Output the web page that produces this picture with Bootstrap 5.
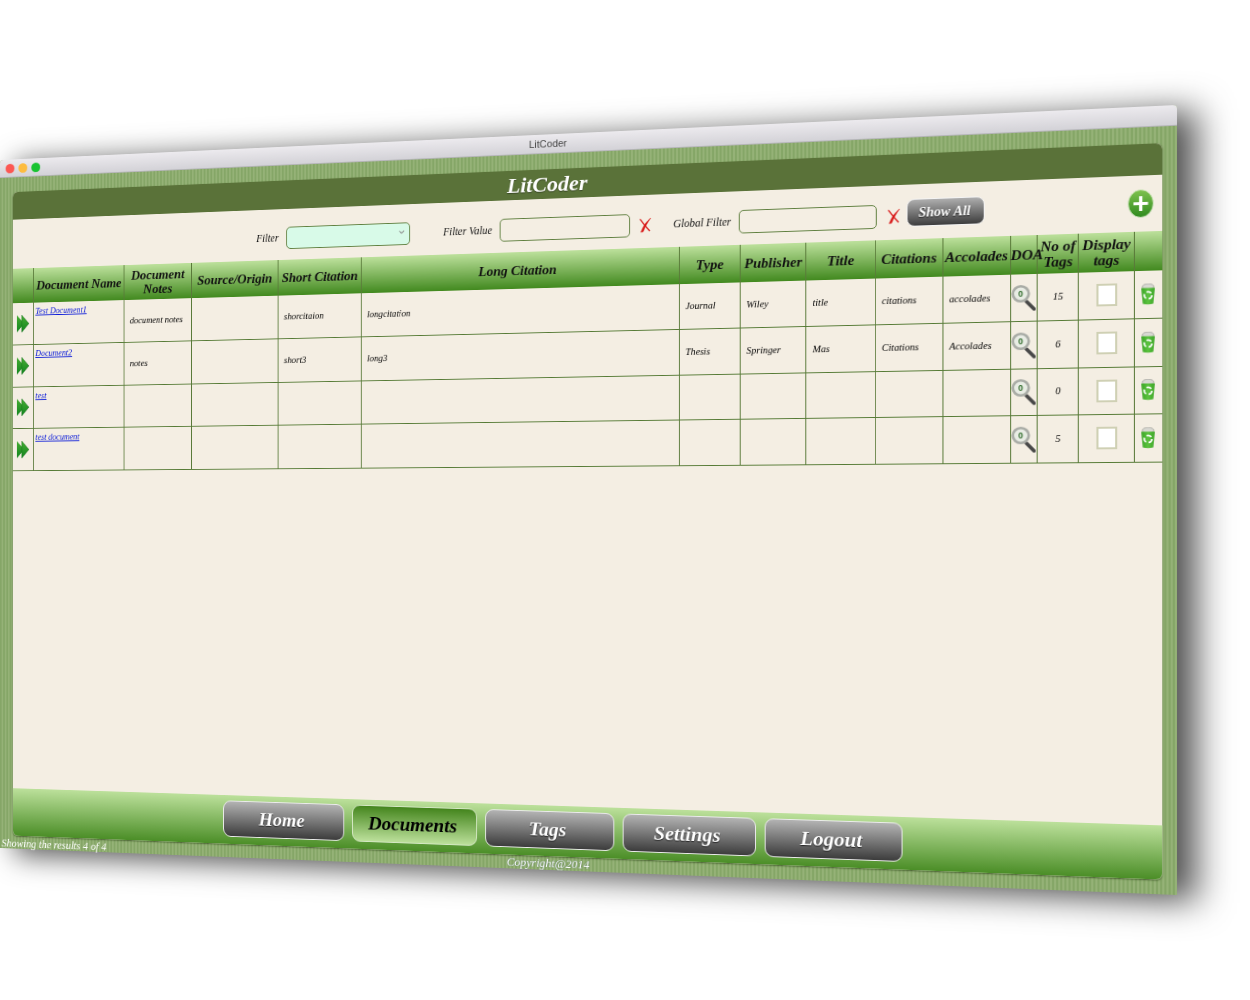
<!DOCTYPE html>
<html>
<head>
    <meta charset="UTF-8">
    <title>LitCoder</title>
    <link href="https://cdn.jsdelivr.net/npm/bootstrap@5.3.3/dist/css/bootstrap.min.css" rel="stylesheet">
    <style>
        html, body { height: 100%; overflow: hidden; background: #fff; }
        body { font-family: "Liberation Serif", serif; }

        /* the whole window is tilted, like the screenshot */
        #litWindow {
            position: absolute; left: 0; top: 0; width: 1280px; height: 800px;
            transform-origin: 0 0;
            transform: matrix3d(0.800805,-0.05356,0,-0.00010087, 0,0.86,0,0, 0,0,1,0, 0,160,0,1);
            box-shadow: 18px 6px 34px rgba(0,0,0,.7);
            background: repeating-linear-gradient(90deg, #85a667 0 2px, #95b277 2px 4px);
            border-radius: 4px 4px 0 0;
        }
        #titleBar {
            height: 21px; font: 11px "Liberation Sans", sans-serif; color: #444;
            background: linear-gradient(#eceaee, #d3d2d7); border-bottom: 1px solid #b5b5b8;
            border-radius: 4px 4px 0 0;
        }
        .light { width: 11px; height: 11px; border-radius: 50%; }
        .light-red { background: #fc5753; }
        .light-amber { background: #fdbc40; }
        .light-green { background: #19c332; }
        #lightsBox { left: 7px; top: 5px; gap: 5px; }
        #panel {
            margin: 17px 14px 0 16px; height: 747px; border-radius: 6px; overflow: hidden;
            background: #f4eee3; box-shadow: 0 1px 2px rgba(40,60,20,.7);
        }
        #panelHead {
            height: 32px; padding-right: 4px; background: #5a7239; color: #fff;
            font-size: 24px; font-weight: bold; font-style: italic; line-height: 32px;
            text-shadow: 0 1px 1px rgba(0,0,0,.4);
        }
        #filterRow { height: 57px; padding: 20px 8px 0 294px; font-style: italic; font-size: 11.5px; color: #111; }
        #filterRow label { height: 25px; line-height: 25px; white-space: nowrap; }
        .filter-field {
            width: 142px; height: 25px; padding: 0 4px; border: 1px solid #5f7f3f; border-radius: 5px;
            background-color: transparent; box-shadow: none;
        }
        select.filter-field {
            background-color: #d8fae8; background-size: 7px; background-position: right 5px top 6px;
            background-image: url("data:image/svg+xml,%3csvg xmlns='http://www.w3.org/2000/svg' viewBox='0 0 16 16'%3e%3cpath fill='none' stroke='%23888' stroke-width='2.5' d='M2 5l6 6 6-6'/%3e%3c/svg%3e");
        }
        .clear-mark { width: 14px; height: 17px; margin: 4px 0 0 9px; }
        .clear-far { margin-left: 10px; }
        .lab-a { width: 26px; margin-right: 9px; }
        .lab-b { width: 54px; margin: 0 9px 0 37px; }
        .lab-c { width: 60px; margin: 0 9px 0 23px; }
        #showAll {
            width: 78px; height: 29px; padding: 0 2px 0 0; margin: -5px 0 0 6px; border: 1px solid #f4f4f4; border-radius: 8px;
            background: linear-gradient(#aeaeae, #3d3d3d); color: #fff;
            font: italic bold 14px "Liberation Serif", serif; text-shadow: 0 1px 1px #222;
        }
        #addBtn { width: 25px; height: 29px; margin: -6px 0 0 auto; }

        #docTable { table-layout: fixed; width: 1250px; --bs-table-bg: transparent; border-collapse: collapse; }
        #docTable th {
            height: 40px; padding: 0; text-align: center; vertical-align: middle; white-space: nowrap;
            background: linear-gradient(#bce09b, #42891f); color: #111; border: 0; border-right: 1px solid #5a7a3a;
            font-size: 15px; font-weight: bold; font-style: italic; line-height: 16px;
        }
        #docTable td {
            height: 48px; padding: 0 6px; vertical-align: middle; font-size: 10.2px; font-style: italic; color: #000;
            border: 0; border-right: 1px solid #5a7a3a; border-bottom: 1px solid #557a35; background: transparent;
            box-shadow: none; white-space: nowrap;
        }
        #docTable tr:nth-child(even) td { height: 49px; }
        #docTable th:last-child, #docTable td:last-child { border-right: 0; }
        #docTable td.name-cell { vertical-align: top; padding: 2px 2px 0; }
        #docTable td.icon-cell { padding: 0; text-align: center; }
        #docTable a { color: #0a1ad8; font-size: 9.8px; }
        #docTable svg { display: inline-block; vertical-align: middle; }
        #docTable svg text { font-style: normal; }
        .tag-box { display: inline-block; width: 20px; height: 23px; background: #fff; border: 2px solid #cfd0b4; vertical-align: middle; }

        #panelFoot {
            height: 55px; margin-top: 0; padding-top: 6px; gap: 9px;
            background: linear-gradient(#bce09b, #4b8e27);
        }
        .foot-btn {
            width: 141px; height: 41px; padding: 0 3px 0 0; border: 1px solid #ececec; border-radius: 9px;
            background: linear-gradient(#b3b3b3, #3c3c3c); color: #fff;
            font: italic bold 21.5px/38px "Liberation Serif", serif; text-shadow: 0 1px 1px #222;
        }
        .foot-btn:hover { background: linear-gradient(#b3b3b3, #3c3c3c); color: #fff; }
        .foot-btn.current { background: linear-gradient(#44851d, #bce09b); color: #000; text-shadow: none; border-color: #d5e8c5; }
        #statusLine {
            left: 2px; top: 785px; color: #fff; font-size: 12.5px; font-style: italic; white-space: nowrap;
        }
        #copyLine { left: 0; right: 0; top: 783px; color: #fff; font-size: 13px; font-style: italic; text-align: center; text-shadow: 0 0 1px #355; }
    </style>
</head>
<body>
<svg width="0" height="0" class="position-absolute">
    <defs>
        <linearGradient id="arrowFill" x1="0" y1="0" x2="0" y2="1">
            <stop offset="0" stop-color="#46ad32"/><stop offset="1" stop-color="#12841f"/>
        </linearGradient>
        <linearGradient id="plusFill" x1="0" y1="0" x2="0" y2="1">
            <stop offset="0" stop-color="#7fc24f"/><stop offset="1" stop-color="#2f8a1e"/>
        </linearGradient>
        <linearGradient id="binFill" x1="0" y1="0" x2="1" y2="0">
            <stop offset="0" stop-color="#3aa526"/><stop offset=".5" stop-color="#5cc23f"/><stop offset="1" stop-color="#3aa526"/>
        </linearGradient>
        <symbol id="icoArrow" viewBox="0 0 17 22">
            <path d="M1 1 L10 11 L1 21Z" fill="url(#arrowFill)"/>
            <path d="M7 1 L16 11 L7 21Z" fill="url(#arrowFill)" stroke="#0c6a17" stroke-width=".5"/>
        </symbol>
        <symbol id="icoClear" viewBox="0 0 14 17">
            <path d="M1.500 2 C3 3 5 7 12 15" stroke="#d81818" stroke-width="1.300" fill="none"/>
            <path d="M13 1 C9 4 5 9 2.500 16 L5 15.500 C7 10 10 5 13 1Z" fill="#d81818" stroke="#d81818" stroke-width=".5"/>
        </symbol>
        <symbol id="icoBin" viewBox="0 0 15 22">
            <ellipse cx="7.500" cy="3.200" rx="5.500" ry="3" fill="#d8d8d2" stroke="#9c9c96" stroke-width=".7"/>
            <path d="M1 4.500 H14 L12.500 20.500 Q7.500 22 2.500 20.500Z" fill="url(#binFill)"/>
            <circle cx="7.500" cy="12" r="3.600" fill="none" stroke="#fff" stroke-width="1.600" stroke-dasharray="5 2.500"/>
        </symbol>
    </defs>
</svg>

<div id="litWindow" class="d-flex flex-column">
    <div id="titleBar" class="position-relative d-flex align-items-center justify-content-center">
        <div id="lightsBox" class="position-absolute d-flex">
            <span class="light light-red"></span>
            <span class="light light-amber"></span>
            <span class="light light-green"></span>
        </div>
        LitCoder
    </div>

    <div id="panel" class="d-flex flex-column">
        <div id="panelHead" class="text-center">LitCoder</div>

        <div id="filterRow" class="d-flex align-items-start">
            <label class="lab-a">Filter</label>
            <select class="form-select filter-field"><option></option></select>
            <label class="lab-b">Filter Value</label>
            <input type="text" class="form-control filter-field">
            <svg class="clear-mark"><use href="#icoClear"/></svg>
            <label class="lab-c">Global Filter</label>
            <input type="text" class="form-control filter-field">
            <svg class="clear-mark clear-far"><use href="#icoClear"/></svg>
            <button id="showAll" class="btn">Show All</button>
            <svg id="addBtn" viewBox="0 0 25 29">
                <ellipse cx="12.500" cy="14.500" rx="12" ry="14" fill="url(#plusFill)" stroke="#dfeed2" stroke-width=".8"/>
                <path d="M12.500 7 V22 M5.500 14.500 H19.500" stroke="#fff" stroke-width="3.200"/>
            </svg>
        </div>

        <table id="docTable" class="table mb-0">
            <colgroup id="docCols"></colgroup>
            <thead>
            <tr>
                <th></th>
                <th>Document Name</th>
                <th>Document<br>Notes</th>
                <th>Source/Origin</th>
                <th>Short Citation</th>
                <th>Long Citation</th>
                <th>Type</th>
                <th>Publisher</th>
                <th>Title</th>
                <th>Citations</th>
                <th>Accolades</th>
                <th>DOA</th>
                <th>No of<br>Tags</th>
                <th>Display<br>tags</th>
                <th></th>
            </tr>
            </thead>
            <tbody id="docRows"></tbody>
        </table>

        <div class="flex-grow-1"></div>

        <div id="panelFoot" class="d-flex justify-content-center">
            <a href="#" class="btn foot-btn">Home</a>
            <a href="#" class="btn foot-btn current">Documents</a>
            <a href="#" class="btn foot-btn">Tags</a>
            <a href="#" class="btn foot-btn">Settings</a>
            <a href="#" class="btn foot-btn">Logout</a>
        </div>
    </div>

    <div id="statusLine" class="position-absolute">Showing the results 4 of 4</div>
    <div id="copyLine" class="position-absolute">Copyright@2014</div>
</div>

<script>
    const colWidths = [25.5, 111.4, 80.4, 102.5, 95.8, 349.8, 64.2, 68.4, 70.5, 67.8, 66.8, 26.5, 40.4, 53.4, 26.7];
    const docs = [
        ['Test Document1', 'document notes', 'shorcitaion', 'longcitation', 'Journal', 'Wiley', 'title', 'citations', 'accolades', '15'],
        ['Document2', 'notes', 'short3', 'long3', 'Thesis', 'Springer', 'Mas', 'Citations', 'Accolades', '6'],
        ['test', '', '', '', '', '', '', '', '', '0'],
        ['test document', '', '', '', '', '', '', '', '', '5']
    ];

    document.getElementById('docCols').innerHTML = colWidths.map(w => `<col style="width:${w}px">`).join('');

    const lens = `<svg width="24" height="28" viewBox="0 0 24 28">
        <path d="M15 18 L22.500 26" stroke="#484848" stroke-width="3.500" stroke-linecap="round"/>
        <circle cx="9.500" cy="10" r="7.800" fill="#e8ece4" stroke="#a9aca6" stroke-width="2.600"/>
        <text x="9.500" y="13" text-anchor="middle" font-size="8.500" font-weight="bold" font-family="Liberation Sans, sans-serif" fill="#2f6b2a">0</text>
    </svg>`;

    document.getElementById('docRows').innerHTML = docs.map(d => `
        <tr>
            <td class="icon-cell"><svg width="17" height="22"><use href="#icoArrow"/></svg></td>
            <td class="name-cell"><a href="#">${d[0]}</a></td>
            <td>${d[1]}</td>
            <td></td>
            <td>${d[2]}</td>
            <td>${d[3]}</td>
            <td>${d[4]}</td>
            <td>${d[5]}</td>
            <td>${d[6]}</td>
            <td>${d[7]}</td>
            <td>${d[8]}</td>
            <td class="icon-cell">${lens}</td>
            <td class="icon-cell">${d[9]}</td>
            <td class="icon-cell"><span class="tag-box"></span></td>
            <td class="icon-cell"><svg width="15" height="22"><use href="#icoBin"/></svg></td>
        </tr>`).join('');
</script>
<script src="https://cdn.jsdelivr.net/npm/bootstrap@5.3.3/dist/js/bootstrap.bundle.min.js"></script>
</body>
</html>
